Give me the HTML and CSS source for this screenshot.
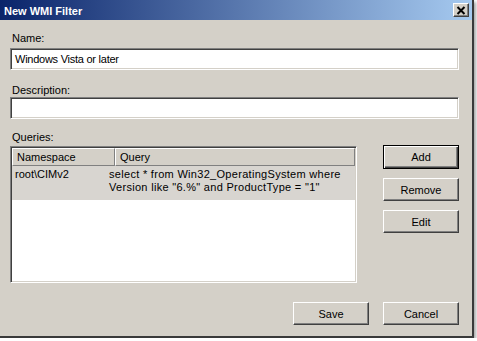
FILE: index.html
```html
<!DOCTYPE html>
<html>
<head>
<meta charset="utf-8">
<link rel="stylesheet" href="styles.css">
</head>
<body>
<div class="window">
  <div class="titlebar">
    <span class="title">New WMI Filter</span>
    <button class="close" aria-label="Close">
      <svg width="10" height="9" viewBox="0 0 10 9"><path d="M1.5 1 L8.5 8 M8.5 1 L1.5 8" stroke="#000" stroke-width="2" fill="none"/></svg>
    </button>
  </div>
  <div class="content">
    <div class="label">Name:</div>
    <div class="field">Windows Vista or later</div>
    <div class="label gap">Description:</div>
    <div class="field"></div>
    <div class="label gap2">Queries:</div>
    <div class="queries">
      <div class="list">
        <div class="list-head">
          <div class="hcol ns">Namespace</div>
          <div class="hcol q">Query</div>
        </div>
        <div class="row selected">
          <div class="cell ns">root\CIMv2</div>
          <div class="cell q">select * from Win32_OperatingSystem where<br>Version like "6.%" and ProductType = "1"</div>
        </div>
      </div>
      <div class="side">
        <button class="btn default">Add</button>
        <button class="btn">Remove</button>
        <button class="btn">Edit</button>
      </div>
    </div>
    <div class="footer">
      <button class="btn">Save</button>
      <button class="btn">Cancel</button>
    </div>
  </div>
</div>
</body>
</html>
```

FILE: styles.css
```css
html, body {
  margin: 0;
  padding: 0;
  background: #ffffff;
}

body {
  font-family: "Liberation Sans", Arial, sans-serif;
  font-size: 11px;
  color: #000;
}

.window {
  width: 472px;
  height: 336px;
  background: #d4d0c8;
  border-right: 2px solid #3a3a3a;
  border-bottom: 2px solid #3a3a3a;
  box-shadow: 2px 2px 3px rgba(0, 0, 0, 0.35);
  display: flex;
  flex-direction: column;
}

.titlebar {
  height: 20px;
  flex: none;
  background: linear-gradient(to right, #0a246a, #a6caf0);
  display: flex;
  align-items: center;
  justify-content: space-between;
  padding: 0 3px 0 4px;
  box-sizing: border-box;
}

.title {
  color: #fff;
  font-weight: bold;
  font-size: 11px;
  line-height: 14px;
  padding-top: 1px;
}

.close {
  width: 16px;
  height: 14px;
  padding: 0;
  margin: 0;
  background: #d4d0c8;
  border: 1px solid;
  border-color: #fff #404040 #404040 #fff;
  box-shadow: inset -1px -1px #808080;
  display: flex;
  align-items: center;
  justify-content: center;
  box-sizing: border-box;
}

.close svg {
  display: block;
}

.content {
  padding: 11px 0 0 10px;
  width: 449px;
}

.label {
  line-height: 14px;
  height: 14px;
  padding-left: 2px;
  margin-bottom: 3px;
}

.label.gap {
  margin-top: 13px;
  margin-bottom: 0;
}

.label.gap2 {
  margin-top: 11px;
  margin-bottom: 0;
}

.field {
  height: 22px;
  box-sizing: border-box;
  background: #fff;
  border: 1px solid;
  border-color: #808080 #fff #fff #808080;
  box-shadow: inset 1px 1px #404040, inset -1px -1px #d4d0c8;
  padding: 0 4px;
  line-height: 20px;
  letter-spacing: -0.25px;
}

.queries {
  display: grid;
  grid-template-columns: 347px 76px;
  column-gap: 26px;
  align-items: start;
}

.list {
  margin-top: 2px;
  height: 137px;
  box-sizing: border-box;
  background: #fff;
  border: 1px solid;
  border-color: #808080 #fff #fff #808080;
  box-shadow: inset 1px 1px #404040, inset -1px -1px #d4d0c8;
  padding: 1px;
}

.list-head {
  display: flex;
  height: 18px;
}

.hcol {
  box-sizing: border-box;
  height: 18px;
  line-height: 16px;
  background: #d4d0c8;
  border: 1px solid;
  border-color: #fff #808080 #808080 #fff;
  padding-left: 4px;
}

.hcol.ns {
  width: 103px;
}

.hcol.q {
  flex: 1;
}

.row {
  display: flex;
  height: 34px;
  box-sizing: border-box;
  padding-top: 2px;
  line-height: 13px;
}

.row.selected {
  background: #d8d5d0;
}

.cell.ns {
  width: 97px;
  padding-left: 3px;
  box-sizing: border-box;
}

.cell.q {
  flex: 1;
  white-space: nowrap;
  letter-spacing: 0.3px;
}

.side {
  margin-top: 1px;
  display: flex;
  flex-direction: column;
  gap: 9px;
}

.btn {
  font-family: "Liberation Sans", Arial, sans-serif;
  font-size: 11px;
  color: #000;
  width: 76px;
  height: 23px;
  padding: 0;
  margin: 0;
  background: #d4d0c8;
  border: 1px solid;
  border-color: #fff #404040 #404040 #fff;
  box-shadow: inset -1px -1px #808080;
  box-sizing: border-box;
}

.btn.default {
  height: 24px;
  border-color: #000;
  box-shadow: inset 1px 1px #fff, inset -1px -1px #404040, inset -2px -2px #808080;
}

.footer {
  margin-top: 19px;
  display: flex;
  justify-content: flex-end;
  gap: 14px;
}
```
